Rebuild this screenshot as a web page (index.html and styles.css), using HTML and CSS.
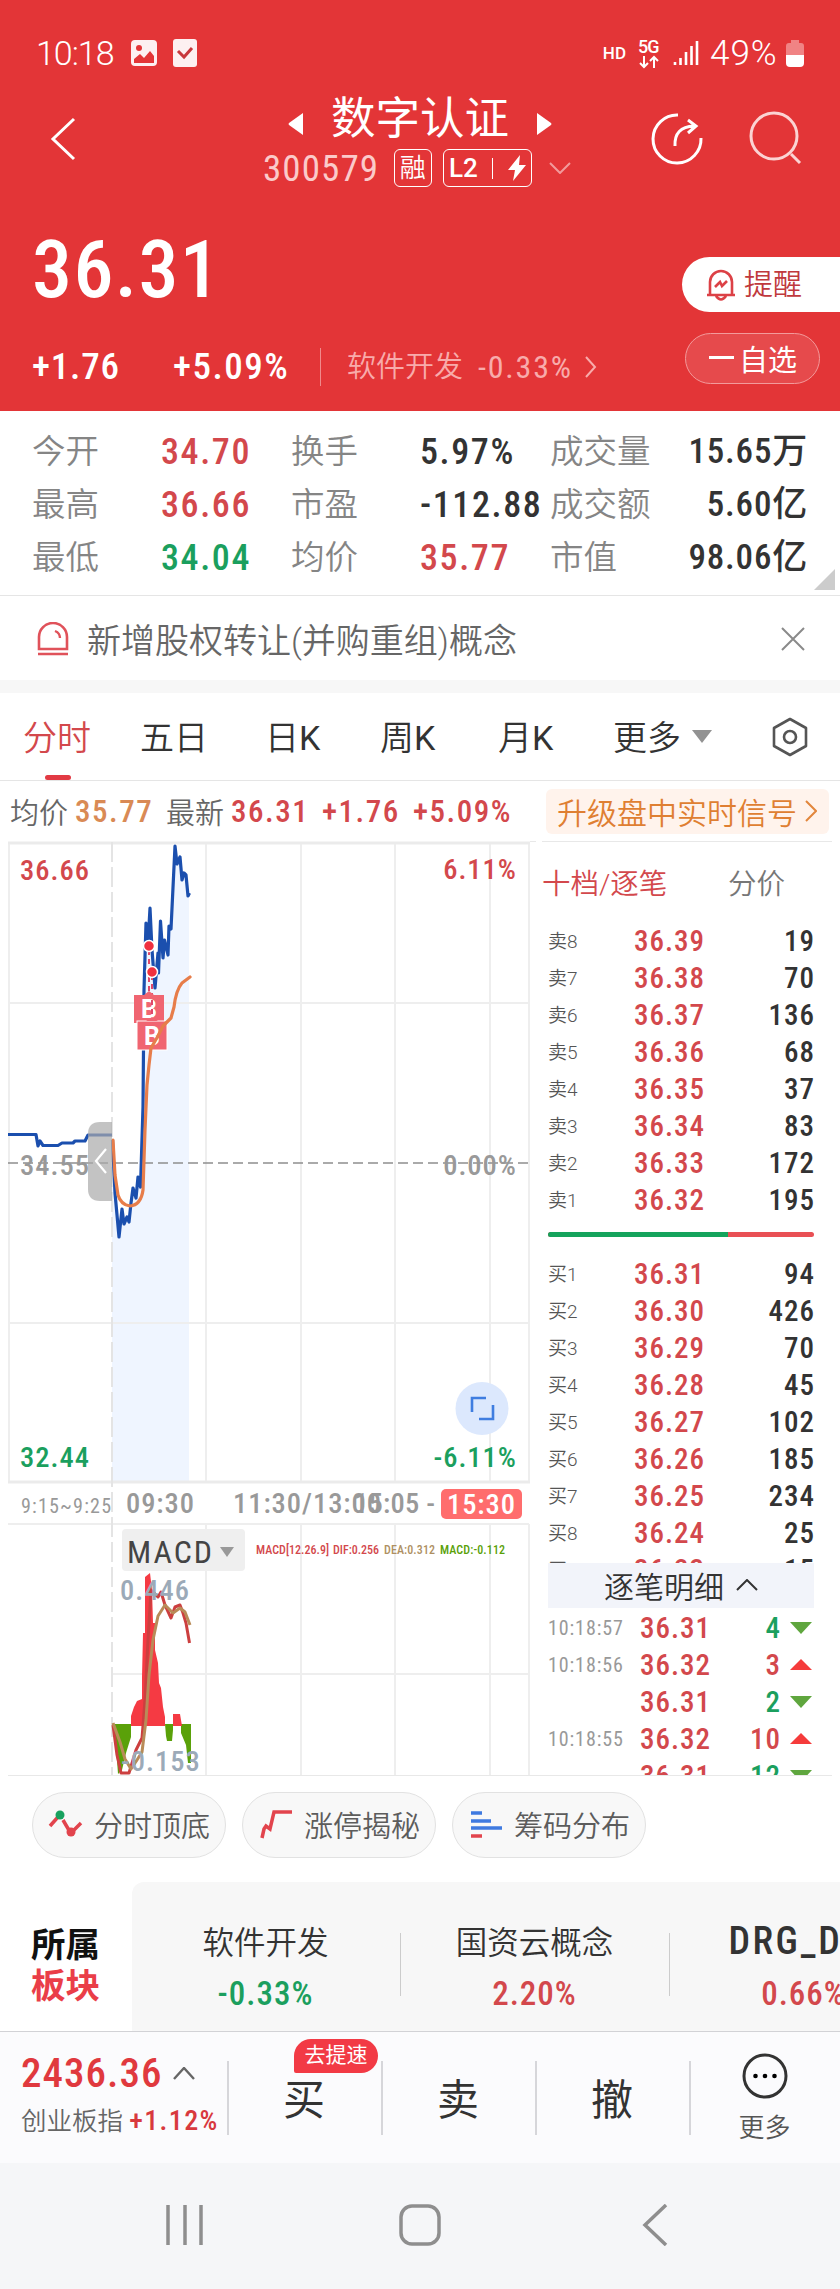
FILE: index.html
```html
<!DOCTYPE html>
<html lang="zh-CN">
<head>
  <meta charset="UTF-8">
  <meta name="viewport" content="width=device-width, initial-scale=1.0">
  <title>数字认证 300579</title>
  <link rel="stylesheet" href="styles.css">
</head>
<body>
  <div class="top">
    <!-- Status bar -->
    <div class="status">
      <span class="clock">10:18</span>
      <svg class="ico-image" width="26" height="26" viewBox="0 0 26 26"><rect width="26" height="26" rx="4" fill="#fff" opacity=".93"/><circle cx="8" cy="8" r="3" fill="#e33537"/><path d="M3 23v-4l6-5 4 4 6-7 4 5v7z" fill="#e33537"/></svg>
      <svg width="24" height="28" viewBox="0 0 24 28"><rect width="24" height="28" rx="3" fill="#fff" opacity=".93"/><path d="M5 12l6 6 8-9" fill="none" stroke="#c8383c" stroke-width="3"/></svg>
      <span class="hd">HD</span>
      <span class="net">5G<svg width="22" height="14" viewBox="0 0 22 14"><path d="M6 1v11M2 8l4 4 4-4M16 13V2M12 6l4-4 4 4" fill="none" stroke="#fff" stroke-width="2"/></svg></span>
      <svg class="signal" width="26" height="26" viewBox="0 0 26 26"><path d="M2 22v3M7.500 18v7M13 12v13M18.500 6v19M24 1v24" stroke="#fff" stroke-width="2.600"/></svg>
      <span class="percent">49%</span>
      <svg class="battery" width="18" height="27" viewBox="0 0 18 27"><path d="M5 0h8v3h2q3 0 3 3v10H0V6q0-3 3-3h2z" fill="#f08384"/><path d="M0 15h18v8q0 4-4 4H4q-4 0-4-4z" fill="#fff"/></svg>
    </div>

    <!-- Title bar -->
    <div class="title-bar">
      <svg class="back" width="26" height="44" viewBox="0 0 26 44"><path d="M24 2L3 22l21 20" fill="none" stroke="#fff" stroke-width="3"/></svg>
      <div class="title">
        <div class="name">
          <svg width="16" height="24" viewBox="0 0 16 24"><path d="M15 1v22L1 13q-1-1 0-2z" fill="#fff"/></svg>
          <h1>数字认证</h1>
          <svg width="16" height="24" viewBox="0 0 16 24"><path d="M1 1v22l14-10q1-1 0-2z" fill="#fff"/></svg>
        </div>
        <div class="code">
          <span class="code-number">300579</span>
          <span class="tag">融</span>
          <span class="tag level">L2<i></i><svg width="18" height="26" viewBox="0 0 18 26"><path d="M12 0L0 15h7L5 26 18 10h-7z" fill="#fff"/></svg></span>
          <svg class="code-arrow" width="22" height="12" viewBox="0 0 22 12"><path d="M1 1l10 10L21 1" fill="none" stroke="#f29a9b" stroke-width="2"/></svg>
        </div>
      </div>
      <svg class="share" width="52" height="54" viewBox="0 0 52 54"><path d="M27 3A24 24 0 1 0 50 26" fill="none" stroke="#fff" stroke-width="3"/><path d="M24 34q-1-19 19-20M37 8l8 6-8 7" fill="none" stroke="#fff" stroke-width="3"/></svg>
      <svg class="search" width="54" height="54" viewBox="0 0 54 54"><circle cx="25" cy="25" r="23" fill="none" stroke="#fbd3d3" stroke-width="3"/><path d="M42 43l9 9" stroke="#fbd3d3" stroke-width="3"/></svg>
    </div>

    <!-- Price -->
    <div class="price-area">
      <div class="price-left">
        <div class="price">36.31</div>
        <div class="change">
          <b class="diff">+1.76</b>
          <b class="rate">+5.09%</b>
          <i></i>
          <span class="sector">软件开发</span>
          <span class="sector-rate">-0.33%</span>
          <svg width="12" height="22" viewBox="0 0 12 22"><path d="M1 1l9 10-9 10" fill="none" stroke="#f8abab" stroke-width="2"/></svg>
        </div>
      </div>
      <div class="price-right">
        <div class="remind">
          <svg width="30" height="32" viewBox="0 0 30 32"><path d="M4 25V13a11 11 0 0 1 22 0v12M1 26h28M10 27q5 7 10 0M9 18l5-5 2 4 5-5" fill="none" stroke="#dc4146" stroke-width="2.600"/></svg>
          <span>提醒</span>
        </div>
        <div class="follow"><i></i>自选</div>
      </div>
    </div>
  </div>

  <!-- Quote figures -->
  <div class="stats">
    <span class="label">今开</span><b class="red">34.70</b><span class="label">换手</span><b>5.97%</b><span class="label">成交量</span><b class="end">15.65万</b>
    <span class="label">最高</span><b class="red">36.66</b><span class="label">市盈</span><b>-112.88</b><span class="label">成交额</span><b class="end">5.60亿</b>
    <span class="label">最低</span><b class="green">34.04</b><span class="label">均价</span><b class="red">35.77</b><span class="label">市值</span><b class="end">98.06亿</b>
  </div>

  <!-- Notice -->
  <div class="notice">
    <svg width="32" height="34" viewBox="0 0 32 34"><path d="M2 27V15a14 14 0 0 1 28 0v12zM1 32h30" fill="none" stroke="#e0525a" stroke-width="2.600"/><path d="M18 9q5 2 5 7" fill="none" stroke="#e0525a" stroke-width="2.400"/></svg>
    <span>新增股权转让(并购重组)概念</span>
    <svg class="close" width="24" height="24" viewBox="0 0 24 24"><path d="M1 1l22 22M23 1L1 23" stroke="#8a8a8a" stroke-width="2"/></svg>
  </div>

  <!-- Chart tabs -->
  <div class="tabs">
    <span class="active">分时</span><span>五日</span><span>日<b>K</b></span><span>周<b>K</b></span><span>月<b>K</b></span><span>更多</span>
    <svg class="more-arrow" width="20" height="13" viewBox="0 0 20 13"><path d="M0 0h20L10 13z" fill="#929292"/></svg>
    <svg class="setting" width="38" height="40" viewBox="0 0 38 40"><path d="M19 2l16 9v18l-16 9-16-9V11z" fill="none" stroke="#555" stroke-width="2.600" stroke-linejoin="round"/><circle cx="19" cy="20" r="6" fill="none" stroke="#555" stroke-width="2.600"/></svg>
  </div>
  <div class="summary">
    <span>均价</span><b class="orange">35.77</b>
    <span>最新</span><b class="red">36.31</b><b class="red up">+1.76</b><b class="red pct">+5.09%</b>
    <div class="upgrade">升级盘中实时信号<svg width="12" height="22" viewBox="0 0 12 22"><path d="M1 1l10 10L1 21" fill="none" stroke="#e2863c" stroke-width="2"/></svg></div>
  </div>

  <div class="market">
    <!-- Time line chart and MACD, y axis follows the page -->
    <svg class="chart" width="536" height="936" viewBox="0 841 536 936">
      <path class="area" d="M112 1482V1142L115 1193 119 1237 122 1209 124 1224 127 1217 129 1222 131 1203 133 1188 136 1198 138 1177 140.500 1187 143 1107 144 990 146 923 148 943 150 908 152 950 155 988 158 953 160 921 163 958 164 940 168 955 169 926 171 929 175 846 177 864 180 857 182 880 184 873 186 875 189 893V1482z"/>
      <g class="grid">
        <path d="M9 842V1482M206 842V1482M301 842V1482M395 842V1482M490 842V1482M529 842V1482M9 1003H529M9 1323H529"/>
        <path d="M206 1524V1775M301 1524V1775M395 1524V1775M490 1524V1775M529 1524V1775M112 1674H529M8 1524H529"/>
        <path class="bold" d="M8 843H530M8 1482H530"/>
        <path class="thin" d="M530 841.500H536M8 1775.500H536"/>
        <path class="split" d="M112 842V1775"/>
      </g>
      <path class="middle" d="M8 1163H529"/>

      <g class="axis">
        <text class="red" x="20" y="880">36.66</text>
        <text x="20" y="1175">34.55</text>
        <text class="green" x="20" y="1467">32.44</text>
        <text class="red" x="517" y="879" text-anchor="end">6.11%</text>
        <text x="517" y="1175" text-anchor="end">0.00%</text>
        <text class="green" x="517" y="1467" text-anchor="end">-6.11%</text>
      </g>

      <path class="line" d="M8 1134.500H36L38 1146 40 1141 43 1145.500H58L62 1143H73L75 1141H85L88 1135H112"/>
      <path class="line" d="M112.500 1140L115 1193 119 1237 122 1209 124 1224 127 1217 129 1222 131 1203 133 1188 136 1198 138 1177 140.500 1187 143 1107 144 990 146 923 148 943 150 908 152 950 155 988 158 953 158.500 973 160.500 921 163 958 164.500 940 168 955 169 926 171 929 175 846 177 864 180 857 182 880 184 873 186 875 188 896 189.500 893"/>

      <!-- Buy marks -->
      <path d="M149 950v50M152 975v45" stroke="#e0486a" stroke-width="2" stroke-dasharray="5 4"/>
      <g class="mark">
        <rect x="134" y="995" width="30" height="28"/>
        <path class="tip" d="M144 995l5-4 5 4z"/>
        <text x="149" y="1018">B</text>
        <path d="M152 1000v20" stroke="#e0486a" stroke-width="2" stroke-dasharray="5 4"/>
        <rect class="lower" x="137" y="1021" width="30" height="29"/>
        <path class="tip" d="M146 1021l6-4 6 4z"/>
        <text x="152" y="1045">B</text>
        <circle cx="149" cy="946" r="5.500"/>
        <circle cx="152" cy="972" r="5.500"/>
      </g>
      <path class="average" d="M113 1140L115 1175 118 1195Q121 1205 130 1206 141 1205 143 1190L145 1130 147 1085 149 1065 151 1048 158 1036 163 1026 171 1018 174 1007 Q176 990 182 983L190 977"/>

      <path d="M112 1122h-12q-12 0-12 12v55q0 12 12 12h12z" fill="#aaa" opacity=".7"/>
      <path d="M106 1149l-10 12 10 12" fill="none" stroke="#fff" stroke-width="2.200"/>

      <circle cx="482" cy="1408.500" r="26.500" fill="#dce8fd"/>
      <path d="M486 1398H472V1412M493 1405V1419H479" fill="none" stroke="#3f7de0" stroke-width="2.600"/>

      <g class="axis">
        <text class="small" x="21" y="1513" textLength="90">9:15~9:25</text>
        <text x="126" y="1513" textLength="69">09:30</text>
        <text x="233" y="1513" textLength="149">11:30/13:00</text>
        <text x="354" y="1513" textLength="82">15:05 -</text>
        <rect x="441" y="1489" width="81" height="30" rx="5" fill="#ff6d6d"/>
        <text class="white" x="447" y="1514" textLength="69">15:30</text>
      </g>

      <!-- MACD -->
      <path fill="#5aa109" d="M113 1724h18v13l-5 16-4 17-4 4-1-14-4-30zM165 1724h8v6l-1 11h-5l-1-5zM181 1724h10v39h-3l-2-18-5-12z"/>
      <path fill="#f53a43" d="M131 1726v-10l3-9 3-6 5-2v-22l1-44h2v-56l5-4 2 17 1 33h2v27l3 13 1 20 2 5 2 19 2 10v9zM173 1726v-12h7l2 12z"/>
      <path class="dif" d="M113 1725L117 1755 121 1773H129L136 1750 142 1738 145 1700 148 1640 151 1590 158 1597 161 1592 165 1605 171 1618 175 1607 180 1605 183 1613 186 1623 189.500 1643"/>
      <path class="dea" d="M113 1723L120 1742 125 1759 131 1769 137 1760 142 1752 146 1720 149 1675 153 1640 158 1616 165 1605 173 1613 180 1608 185 1612 190 1625"/>
      <g class="axis macd-axis">
        <text x="120" y="1600">0.446</text>
        <text x="121" y="1771">-0.153</text>
      </g>
      <rect x="122" y="1529" width="123" height="42" rx="4" fill="#efefef"/>
      <text class="macd-name" x="127" y="1563" textLength="85">MACD</text>
      <path d="M220 1547h14l-7 10z" fill="#999"/>
      <g class="legend">
        <text class="red" x="256" y="1554" textLength="73">MACD[12.26.9]</text>
        <text class="red" x="333" y="1554" textLength="46">DIF:0.256</text>
        <text x="384" y="1554" textLength="51" fill="#ae9062">DEA:0.312</text>
        <text x="440" y="1554" textLength="65" fill="#5aa109">MACD:-0.112</text>
      </g>
    </svg>

    <!-- Order book -->
    <div class="book">
      <div class="book-tabs"><span class="red">十档/逐笔</span><span>分价</span></div>
      <div class="orders" id="sell"></div>
      <div class="ratio"><i></i></div>
      <div class="orders buy" id="buy"></div>
      <div class="detail-head">逐笔明细<svg width="22" height="12" viewBox="0 0 22 12"><path d="M1 11L11 1l10 10" fill="none" stroke="#333" stroke-width="2"/></svg></div>
      <div class="ticks" id="ticks"></div>
    </div>
  </div>

  <!-- Tools -->
  <div class="chips">
    <div class="chip"><svg width="36" height="30" viewBox="0 0 36 30"><path d="M2 17l8-9M15 11l7 12M24 23l9-9" stroke="#e2444d" stroke-width="3.500"/><circle cx="12" cy="6" r="4.500" fill="#19a15f"/><circle cx="23" cy="23" r="4.500" fill="#e2444d"/></svg>分时顶底</div>
    <div class="chip"><svg width="36" height="30" viewBox="0 0 36 30"><path d="M4 29l2-9 2-3 4 3 4-17h18" fill="none" stroke="#e2444d" stroke-width="3.500"/></svg>涨停揭秘</div>
    <div class="chip"><svg width="36" height="30" viewBox="0 0 36 30"><path d="M3 4h11M3 12h20M3 19h31" stroke="#3f7ae0" stroke-width="3.500"/><path d="M3 27h11" stroke="#e2444d" stroke-width="3.500"/></svg>筹码分布</div>
  </div>

  <!-- Boards -->
  <div class="boards">
    <div class="boards-title">所属<br><span>板块</span></div>
    <div class="board-list">
      <div class="board">软件开发<b class="green">-0.33%</b></div>
      <div class="board">国资云概念<b class="red">2.20%</b></div>
      <div class="board"><strong>DRG_DIP</strong><b class="red">0.66%</b></div>
    </div>
  </div>

  <!-- Trade bar -->
  <div class="trade">
    <div class="index">
      <div class="index-value">2436.36<svg width="22" height="13" viewBox="0 0 22 13"><path d="M1 12L11 1l10 11" fill="none" stroke="#666" stroke-width="2.400"/></svg></div>
      <div class="index-name">创业板指 <b>+1.12%</b></div>
    </div>
    <div class="action">买<em>去提速</em></div>
    <div class="action">卖</div>
    <div class="action">撤</div>
    <div class="action more">
      <svg width="46" height="46" viewBox="0 0 46 46"><circle cx="23" cy="23" r="21" fill="none" stroke="#333" stroke-width="3"/><circle cx="13.500" cy="23" r="2.300"/><circle cx="23" cy="23" r="2.300"/><circle cx="32.500" cy="23" r="2.300"/></svg>
      更多
    </div>
  </div>

  <!-- System navigation -->
  <div class="nav">
    <svg width="38" height="42" viewBox="0 0 38 42"><path d="M2 1v40M19 1v40M35 1v40" stroke="#8e8e8e" stroke-width="3.500"/></svg>
    <svg width="42" height="42" viewBox="0 0 42 42"><rect x="2" y="2" width="38" height="38" rx="11" fill="none" stroke="#8e8e8e" stroke-width="3.500"/></svg>
    <svg width="26" height="42" viewBox="0 0 26 42"><path d="M24 1L3 21l21 20" fill="none" stroke="#8e8e8e" stroke-width="3.500"/></svg>
  </div>

  <script>
    const sell = [['36.39', 19], ['36.38', 70], ['36.37', 136], ['36.36', 68], ['36.35', 37], ['36.34', 83], ['36.33', 172], ['36.32', 195]];
    const buy = [['36.31', 94], ['36.30', 426], ['36.29', 70], ['36.28', 45], ['36.27', 102], ['36.26', 185], ['36.25', 234], ['36.24', 25], ['36.23', 15]];
    const ticks = [['10:18:57', '36.31', 4, 'down'], ['10:18:56', '36.32', 3, 'up'], ['', '36.31', 2, 'down'], ['10:18:55', '36.32', 10, 'up'], ['', '36.31', 12, 'down']];

    // One line of the order book
    function orderRow(label, row) {
      return `<div class="order"><span>${label}</span><b class="red">${row[0]}</b><b class="qty">${row[1]}</b></div>`;
    }

    document.getElementById('sell').innerHTML = sell.map((row, i) => orderRow('卖' + (8 - i), row)).join('');
    document.getElementById('buy').innerHTML = buy.map((row, i) => orderRow('买' + (i + 1), row)).join('');
    document.getElementById('ticks').innerHTML = ticks.map(t =>
      `<div class="tick"><span>${t[0]}</span><b class="red">${t[1]}</b><b class="qty ${t[3]}">${t[2]}</b><i class="${t[3]}"></i></div>`
    ).join('');
  </script>
</body>
</html>
```
FILE: styles.css
```css
* {
  margin: 0;
  padding: 0;
  box-sizing: border-box;
}

body {
  width: 840px;
  height: 2289px;
  overflow: hidden;
  background-color: #fff;
  color: #333;
  font-family: Roboto, "Noto Sans CJK SC", sans-serif;
  font-weight: 350;
}

svg {
  display: block;
  flex-shrink: 0;
}

b {
  font-weight: 480;
  font-stretch: 85%;
  letter-spacing: 0.04em;
}

.red {
  color: #d3484c;
  fill: #d3484c;
}

.green {
  color: #1b9f5e;
  fill: #1b9f5e;
}

.orange {
  color: #d98a55;
}

/* Red header */
.top {
  height: 411px;
  background-color: #e33537;
  color: #fff;
}

.status {
  display: flex;
  align-items: center;
  height: 106px;
  padding: 0 36px 0 36px;
}

.clock {
  width: 95px;
  font-size: 34px;
  letter-spacing: -1px;
}

.ico-image {
  margin-right: 16px;
}

.hd {
  margin-left: auto;
  font-size: 17px;
  font-weight: 500;
}

.net {
  width: 22px;
  margin: 0 13px 0 12px;
  font-size: 18px;
  line-height: 17px;
  font-weight: 500;
  letter-spacing: -1px;
}

.signal {
  margin-right: 11px;
}

.percent {
  width: 76px;
  font-size: 35px;
  letter-spacing: 1px;
}

.title-bar {
  display: flex;
  position: relative;
  height: 106px;
  padding-left: 50px;
}

.back {
  margin-top: 11px;
}

.title {
  width: 308px;
  margin-left: 187px;
}

.name {
  display: flex;
  align-items: center;
  justify-content: space-between;
  width: 264px;
  height: 35px;
  margin-left: 25px;
}

.name h1 {
  font-size: 44.500px;
  font-weight: 400;
  line-height: 44px;
  margin-top: -10px;
}

.code {
  display: flex;
  align-items: center;
  height: 38px;
  margin-top: 8px;
}

.code-number {
  width: 132px;
  font-size: 37px;
  font-weight: 400;
  font-stretch: 85%;
  line-height: 38px;
  padding-top: 2px;
  color: #fbcaca;
  letter-spacing: 1.1px;
}

.tag {
  display: flex;
  align-items: center;
  justify-content: center;
  width: 38px;
  height: 38px;
  border: 1.5px solid #fff;
  border-radius: 6px;
  font-size: 26px;
  line-height: 34px;
}

.level {
  width: 90px;
  margin-left: 11px;
  font-weight: 480;
}

.level i {
  width: 1px;
  height: 21px;
  margin: 0 15px 0 14px;
  background-color: #fff;
}

.code-arrow {
  margin-left: 17px;
}

.share {
  margin: 6px 0 0 80px;
}

.search {
  margin: 5px 0 0 46px;
}

.price-area {
  display: flex;
  justify-content: space-between;
}

.price-left {
  padding-left: 32px;
}

.price {
  height: 114px;
  font-size: 80px;
  font-weight: 460;
  font-stretch: 85%;
  line-height: 116px;
  letter-spacing: 1.4px;
}

.change {
  display: flex;
  align-items: center;
  height: 82px;
  font-size: 37px;
  line-height: 40px;
}

.diff {
  width: 141px;
  letter-spacing: 0.8px;
}

.rate {
  width: 147px;
  letter-spacing: 1.5px;
}

.change i {
  width: 1px;
  height: 38px;
  margin-right: 26px;
  background-color: #f08a8b;
}

.sector,
.sector-rate {
  font-size: 29px;
  color: #f8abab;
}

.sector-rate {
  width: 107px;
  margin-left: 15px;
  font-size: 32px;
  font-weight: 400;
  font-stretch: 85%;
  letter-spacing: 1.8px;
}

.remind {
  display: flex;
  align-items: center;
  width: 158px;
  height: 55px;
  margin-top: 45px;
  padding-left: 24px;
  border-radius: 28px 0 0 28px;
  background-color: #fff;
  color: #c0393d;
  font-size: 29px;
  line-height: 50px;
}

.remind span {
  margin-left: 8px;
  padding-top: 1px;
}

.follow {
  display: flex;
  align-items: center;
  width: 135px;
  height: 51px;
  margin: 21px 0 0 3px;
  padding: 0 0 2px 23px;
  border: 1px solid #f39a9b;
  border-radius: 26px;
  background-color: #e64a4c;
  font-size: 29px;
  font-weight: 400;
}

.follow i {
  width: 25px;
  height: 3px;
  margin-right: 5px;
  background-color: #fff;
}

/* Quote figures */
.stats {
  display: grid;
  grid-template-columns: 129px 130px 129px 130px 100px 1fr;
  grid-auto-rows: 53px;
  align-items: center;
  position: relative;
  height: 185px;
  padding: 14px 32px 0 32px;
  border-bottom: 1px solid #e5e5e5;
  font-size: 36px;
  white-space: nowrap;
}

.stats::after {
  content: "";
  position: absolute;
  right: 5px;
  bottom: 5px;
  border-left: 21px solid transparent;
  border-bottom: 21px solid #ccc;
}

.stats .label {
  font-size: 33.500px;
  line-height: 50px;
  color: #858585;
}

.stats b {
  line-height: 50px;
  letter-spacing: 1.6px;
}

.stats .end {
  text-align: right;
  font-size: 35px;
  letter-spacing: 0.8px;
}

.notice {
  display: flex;
  align-items: center;
  height: 84px;
  padding: 1px 35px 0 37px;
  font-size: 34px;
  color: #666;
}

.notice span {
  margin-left: 18px;
}

.close {
  margin-left: auto;
}

/* Chart tabs */
.tabs {
  display: grid;
  grid-template-columns: 117px 125px 115px 118px 115px 79px 79px 38px;
  align-items: center;
  height: 101px;
  padding-left: 23px;
  border-top: 13px solid #f7f7f7;
  border-bottom: 1px solid #e5e5e5;
  font-size: 34px;
}

.tabs span {
  line-height: 50px;
  padding-top: 2px;
}

.tabs b {
  font-weight: 430;
  font-stretch: 100%;
}

.active {
  position: relative;
  color: #d3484c;
}

.active::after {
  content: "";
  position: absolute;
  left: 22px;
  bottom: -17px;
  width: 26px;
  height: 5px;
  border-radius: 3px;
  background-color: #e23a44;
}

.summary {
  display: flex;
  align-items: center;
  height: 60px;
  padding-left: 10px;
  font-size: 29px;
  color: #666;
}

.summary b {
  width: 91px;
  margin-left: 7px;
  font-size: 31px;
  letter-spacing: 1.5px;
}

.summary .up {
  width: 85px;
  margin-left: 0;
}

.summary .pct {
  width: 120px;
  margin-left: 6px;
}

.upgrade {
  display: flex;
  align-items: center;
  justify-content: space-between;
  width: 283px;
  height: 45px;
  margin: 1px 11px 0 auto;
  padding: 0 12px 2px 11px;
  border-radius: 6px;
  background-color: #fff3ec;
  color: #df7f32;
  font-size: 30px;
}

/* Chart and order book */
.market {
  display: flex;
  height: 935px;
}

.chart {
  height: 936px;
  background-color: #fff;
}

.grid path {
  fill: none;
  stroke: #eee;
  stroke-width: 2;
}

.grid .bold {
  stroke: #ebebeb;
  stroke-width: 3;
}

.grid .thin {
  stroke: #e8e8e8;
  stroke-width: 1;
}

.grid .split {
  stroke: #e4e4e4;
  stroke-dasharray: 20 5;
}

.middle {
  stroke: #8e8e8e;
  stroke-width: 1.500;
  stroke-dasharray: 10 5;
}

.area {
  fill: #eff5ff;
}

.line {
  fill: none;
  stroke: #1b4fae;
  stroke-width: 3.200;
  stroke-linejoin: round;
}

.average {
  fill: none;
  stroke: #e77d4a;
  stroke-width: 3.200;
  stroke-linejoin: round;
  stroke-linecap: round;
}

.axis text {
  font-size: 28.500px;
  font-weight: 480;
  font-stretch: 85%;
  letter-spacing: 1px;
  fill: #999;
}

.axis .red {
  fill: #d3484c;
}

.axis .green {
  fill: #1b9f5e;
}

.axis .white {
  fill: #fff;
}

.axis .small {
  font-size: 20px;
  font-weight: 400;
  letter-spacing: 0;
}

.axis.macd-axis text {
  fill: #9caab8;
}

.mark rect,
.mark .tip {
  fill: #f06571;
}

.mark .lower {
  stroke: #fff;
  stroke-width: 1;
}

.mark circle {
  fill: #f0303f;
  stroke: #fff;
  stroke-width: 1.500;
}

.mark text {
  font-size: 25px;
  font-weight: 700;
  fill: #fff;
  text-anchor: middle;
}

.dif,
.dea {
  fill: none;
  stroke: #cc3f3f;
  stroke-width: 3;
  stroke-linejoin: round;
}

.dea {
  stroke: #b98b58;
}

.macd-name {
  font-size: 32px;
  font-weight: 400;
  font-stretch: 85%;
  fill: #444;
}

.legend text {
  font-size: 12px;
  font-weight: 500;
  font-stretch: 85%;
}

.book {
  width: 304px;
  margin-left: -8px;
  padding-left: 20px;
  overflow: hidden;
}

.book-tabs {
  display: flex;
  align-items: center;
  height: 82px;
  margin-left: -6px;
  padding-bottom: 2px;
  border-top: 1px solid #e8e8e8;
  font-size: 28.500px;
  color: #777;
}

.book-tabs span:first-child {
  width: 186px;
}

.orders {
  height: 309px;
  padding-right: 17px;
}

.order {
  display: flex;
  align-items: center;
  height: 37px;
  font-size: 29px;
  line-height: 37px;
}

.order span {
  width: 86px;
  font-size: 19px;
  color: #555;
}

.order b,
.tick b {
  letter-spacing: 1px;
}

.order .qty {
  margin-left: auto;
}

.ratio {
  width: 266px;
  height: 5px;
  border-radius: 3px;
  background-color: #e95055;
  overflow: hidden;
}

.ratio i {
  display: block;
  width: 180px;
  height: 5px;
  background-color: #14a35c;
}

.buy {
  height: 326px;
  padding-top: 19px;
  overflow: hidden;
}

.detail-head {
  display: flex;
  align-items: center;
  justify-content: center;
  gap: 12px;
  width: 266px;
  height: 45px;
  padding-bottom: 2px;
  background-color: #f2f4fa;
  font-size: 30px;
}

.ticks {
  height: 168px;
  padding-top: 1px;
  border-bottom: 1px solid #e8e8e8;
  margin-left: -20px;
  padding-left: 20px;
  overflow: hidden;
}

.tick {
  display: flex;
  align-items: center;
  height: 37px;
  padding-right: 20px;
  font-size: 29px;
}

.tick span {
  width: 92px;
  font-size: 20px;
  font-weight: 400;
  font-stretch: 85%;
  letter-spacing: 0.9px;
  color: #999;
}

.tick .qty {
  margin-left: auto;
  margin-right: 9px;
  color: #d3484c;
}

.tick .down.qty {
  color: #1b9f5e;
}

.tick i {
  width: 22px;
  border: 11px solid transparent;
  border-top-width: 0;
  border-bottom: 11px solid #f53b3b;
}

.tick i.down {
  border-top: 12px solid #5fa63e;
  border-bottom: 0;
}

/* Tools */
.chips {
  display: flex;
  gap: 16px;
  height: 106px;
  padding: 16px 32px 0 32px;
}

.chip {
  display: flex;
  align-items: center;
  gap: 10px;
  width: 194px;
  height: 66px;
  padding: 0 0 2px 15px;
  border: 1px solid #e2e2e2;
  border-radius: 33px;
  background-color: #f8f8f8;
  color: #5c5c5c;
  font-size: 29px;
  white-space: nowrap;
}

/* Boards */
.boards {
  display: flex;
  height: 149px;
}

.boards-title {
  width: 132px;
  padding: 43px 0 0 31px;
  font-size: 34.500px;
  font-weight: 700;
  line-height: 41px;
  color: #111;
}

.boards-title span {
  color: #ea3e48;
}

.board-list {
  display: flex;
  width: 708px;
  border-radius: 12px 0 0 0;
  background-color: #f7f7f7;
  overflow: hidden;
}

.board {
  position: relative;
  flex: 0 0 269px;
  left: -1px;
  padding-top: 38px;
  font-size: 31.500px;
  line-height: 48px;
  text-align: center;
}

.board + .board::before {
  content: "";
  position: absolute;
  left: 0;
  top: 51px;
  width: 1px;
  height: 63px;
  background-color: #ccc;
}

.board b {
  display: block;
  font-size: 33px;
  line-height: 52px;
  letter-spacing: 1px;
}

.board strong {
  font-size: 38px;
  font-weight: 480;
  font-stretch: 85%;
  line-height: 36px;
  letter-spacing: 2.5px;
}

/* Trade bar */
.trade {
  display: flex;
  height: 132px;
  border-top: 1px solid #d2d2d6;
  background-color: #fbfbfd;
}

.index {
  flex-shrink: 0;
  width: 227px;
  padding: 14px 0 0 21px;
  white-space: nowrap;
}

.index-value {
  display: flex;
  align-items: center;
  gap: 11px;
  height: 54px;
  font-size: 41px;
  font-weight: 460;
  font-stretch: 85%;
  color: #e0393e;
  letter-spacing: 1px;
}

.index-name {
  font-size: 25.500px;
  line-height: 42px;
  color: #666;
}

.index-name b {
  color: #d8393e;
  font-size: 28px;
  letter-spacing: 1.4px;
}

.action {
  flex-shrink: 0;
  position: relative;
  width: 154px;
  padding-top: 42px;
  font-size: 42px;
  font-weight: 400;
  line-height: 54px;
  text-align: center;
}

.action::before {
  content: "";
  position: absolute;
  left: 0;
  top: 29px;
  width: 1.500px;
  height: 74px;
  background-color: #d6d6da;
}

.action em {
  position: absolute;
  left: 67px;
  top: 7px;
  width: 84px;
  height: 34px;
  border-radius: 17px 17px 17px 2px;
  background-color: #f23a45;
  color: #fff;
  font-size: 21px;
  font-style: normal;
  line-height: 33px;
}

.action.more {
  width: 151px;
  padding-top: 21px;
  font-size: 26px;
  font-weight: 350;
  line-height: 58px;
  color: #555;
}

.more svg {
  margin: 0 auto;
}

.nav {
  display: grid;
  grid-template-columns: 233px 243px 26px;
  align-items: center;
  height: 126px;
  padding: 0 0 3px 166px;
  background-color: #f5f6f8;
}
```
